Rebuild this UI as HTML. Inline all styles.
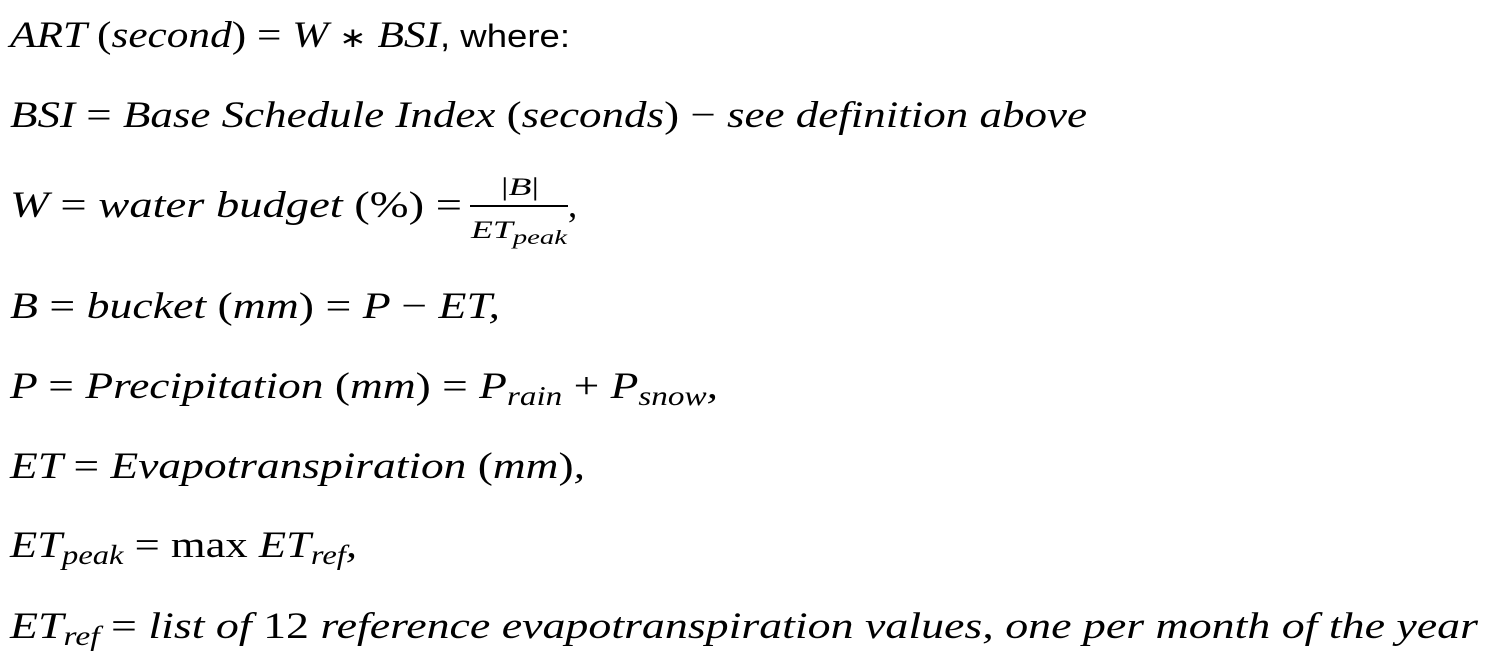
<!DOCTYPE html>
<html><head><meta charset="utf-8"><style>
html,body{margin:0;padding:0;background:#fff;width:1492px;height:667px;overflow:hidden}
svg{display:block}
text{font-family:"Liberation Serif",serif;font-style:italic;font-size:37px;fill:#000}
.r{font-style:normal}
.s{font-family:"Liberation Sans",sans-serif;font-style:normal;font-size:32px}
</style></head><body>
<svg width="1492" height="667" xmlns="http://www.w3.org/2000/svg">
<text x="10" y="47" textLength="430" lengthAdjust="spacingAndGlyphs">ART <tspan class="r">(</tspan>second<tspan class="r">)</tspan> <tspan class="r">=</tspan> W <tspan class="r" style="font-size:28px">∗</tspan> BSI</text>
<text x="440" y="47" class="s" textLength="130" lengthAdjust="spacingAndGlyphs">, where:</text>

<text x="10" y="127" textLength="1077" lengthAdjust="spacingAndGlyphs">BSI <tspan class="r">=</tspan> Base Schedule Index <tspan class="r">(</tspan>seconds<tspan class="r">) −</tspan> see definition above</text>

<text x="10" y="217" textLength="452" lengthAdjust="spacingAndGlyphs">W <tspan class="r">=</tspan> water budget <tspan class="r">(%) =</tspan></text>
<text x="501" y="195" style="font-size:25px" textLength="38" lengthAdjust="spacingAndGlyphs"><tspan class="r">|</tspan>B<tspan class="r">|</tspan></text>
<rect x="470" y="205" width="98" height="2" fill="#000"/>
<text x="471" y="238" style="font-size:25px" textLength="96" lengthAdjust="spacingAndGlyphs">ET<tspan style="font-size:20px" dy="6">peak</tspan></text>
<text x="568" y="217" class="r">,</text>

<text x="10" y="318" textLength="490" lengthAdjust="spacingAndGlyphs">B <tspan class="r">=</tspan> bucket <tspan class="r">(</tspan>mm<tspan class="r">) =</tspan> P <tspan class="r">−</tspan> ET,</text>

<text x="10" y="398" textLength="708" lengthAdjust="spacingAndGlyphs">P <tspan class="r">=</tspan> Precipitation <tspan class="r">(</tspan>mm<tspan class="r">) =</tspan> P<tspan style="font-size:27px" dy="7">rain</tspan><tspan dy="-7"> <tspan class="r">+</tspan> P</tspan><tspan style="font-size:27px" dy="7">snow</tspan><tspan dy="-7">,</tspan></text>

<text x="10" y="478" textLength="575" lengthAdjust="spacingAndGlyphs">ET <tspan class="r">=</tspan> Evapotranspiration <tspan class="r">(</tspan>mm<tspan class="r">)</tspan>,</text>

<text x="10" y="557" textLength="347" lengthAdjust="spacingAndGlyphs">ET<tspan style="font-size:27px" dy="7">peak</tspan><tspan dy="-7"> <tspan class="r">= max</tspan> ET</tspan><tspan style="font-size:27px" dy="7">ref</tspan><tspan dy="-7">,</tspan></text>

<text x="10" y="638" textLength="1468" lengthAdjust="spacingAndGlyphs">ET<tspan style="font-size:27px" dy="7">ref</tspan><tspan dy="-7"> <tspan class="r">=</tspan> list of <tspan class="r">12</tspan> reference evapotranspiration values, one per month of the year</tspan></text>
</svg>
</body></html>
